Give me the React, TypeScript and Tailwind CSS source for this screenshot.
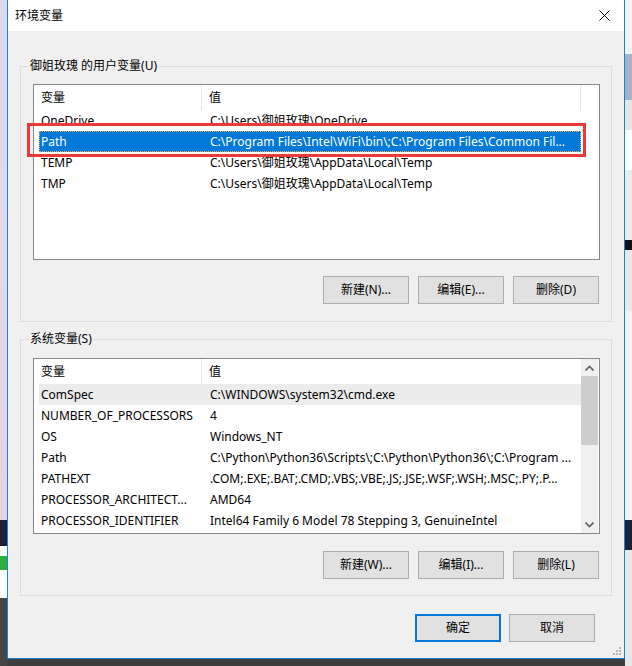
import React from 'react';

type Row = { name: string; value: string; state?: 'selected' | 'hover' };

const userVars: Row[] = [
    { name: 'OneDrive', value: 'C:\\Users\\御姐玫瑰\\OneDrive' },
    { name: 'Path', value: 'C:\\Program Files\\Intel\\WiFi\\bin\\;C:\\Program Files\\Common Fil...', state: 'selected' },
    { name: 'TEMP', value: 'C:\\Users\\御姐玫瑰\\AppData\\Local\\Temp' },
    { name: 'TMP', value: 'C:\\Users\\御姐玫瑰\\AppData\\Local\\Temp' },
];

const systemVars: Row[] = [
    { name: 'ComSpec', value: 'C:\\WINDOWS\\system32\\cmd.exe', state: 'hover' },
    { name: 'NUMBER_OF_PROCESSORS', value: '4' },
    { name: 'OS', value: 'Windows_NT' },
    { name: 'Path', value: 'C:\\Python\\Python36\\Scripts\\;C:\\Python\\Python36\\;C:\\Program ...' },
    { name: 'PATHEXT', value: '.COM;.EXE;.BAT;.CMD;.VBS;.VBE;.JS;.JSE;.WSF;.WSH;.MSC;.PY;.P...' },
    { name: 'PROCESSOR_ARCHITECT...', value: 'AMD64' },
    { name: 'PROCESSOR_IDENTIFIER', value: 'Intel64 Family 6 Model 78 Stepping 3, GenuineIntel' },
];

const VarRow: React.FC<{ row: Row }> = ({ row }) => {
    const tone =
        row.state === 'selected'
            ? 'bg-[#0078d7] text-white outline-1 outline-dotted -outline-offset-1 outline-[#f3a956]'
            : row.state === 'hover'
              ? 'bg-[#ececec]'
              : '';
    return (
        <div className={`flex h-[21px] items-center ml-[5px] ${tone}`}>
            <div className="w-[163px] pl-[2px] pr-[4px] truncate">{row.name}</div>
            <div className="flex-1 pl-[8px] pr-[4px] truncate">{row.value}</div>
        </div>
    );
};

const Chevron: React.FC<{ down?: boolean }> = ({ down }) => (
    <svg width="9" height="6" viewBox="0 0 9 6" className={down ? 'rotate-180' : ''}>
        <path d="M0.5 5.5 L4.5 1.5 L8.5 5.5" fill="none" stroke="#606060" strokeWidth="1.6" />
    </svg>
);

const VarList: React.FC<{ rows: Row[]; scroll?: boolean; marked?: boolean }> = ({ rows, scroll, marked }) => (
    <div className="relative flex h-[176px] border border-[#828790] bg-white">
        <div className="w-[547px] flex flex-col overflow-hidden">
            <div className="flex h-[25px] shrink-0 items-center">
                <div className="w-[168px] h-full flex items-center pl-[7px] border-r border-[#e5e5e5]">变量</div>
                <div className={`flex-1 h-full flex items-center pl-[7px] ${scroll ? '' : 'border-r border-[#e5e5e5]'}`}>值</div>
            </div>
            {rows.map((r) => (
                <VarRow key={r.name} row={r} />
            ))}
        </div>
        {scroll ? (
            <div className="w-[17px] bg-[#f0f0f0] flex flex-col items-center">
                <div className="h-[17px] flex items-center justify-center">
                    <Chevron />
                </div>
                <div className="w-[17px] h-[69px] bg-[#cdcdcd]" />
                <div className="flex-1" />
                <div className="h-[17px] flex items-center justify-center">
                    <Chevron down />
                </div>
            </div>
        ) : (
            <div className="w-[17px]" />
        )}
        {marked && (
            <div className="absolute left-[-7px] top-[38px] w-[559px] h-[34px] border-[3px] border-[#ec3a3a]" />
        )}
    </div>
);

const Btn: React.FC<{ label: string; primary?: boolean }> = ({ label, primary }) => (
    <button
        className={`w-[86px] h-[28px] bg-[#e1e1e1] text-black ${
            primary ? 'border-2 border-[#0078d7]' : 'border border-[#adadad]'
        }`}
    >
        {label}
    </button>
);

const Group: React.FC<{ title: string; children: React.ReactNode; className?: string }> = ({ title, children, className }) => (
    <div className={`relative mx-[12px] border border-[#dcdcdc] pl-[12px] pr-[11px] ${className ?? ''}`}>
        <span className="absolute left-[8px] top-[-9px] px-[1px] bg-[#f0f0f0] leading-[16px]">{title}</span>
        {children}
    </div>
);

export default function App() {
    return (
        <div className="w-[632px] h-[666px] flex overflow-hidden text-[12px] text-black font-['Noto_Sans','Noto_Sans_CJK_SC',sans-serif]">
            {/* desktop behind, left edge */}
            <div className="w-[7px] flex flex-col">
                <div className="h-[520px] bg-linear-to-b from-[#dcd9ee] via-[#e2d8ec] to-[#e6d2e2]" />
                <div className="h-[26px] bg-[#1d2038]" />
                <div className="h-[10px] bg-white" />
                <div className="h-[14px] bg-[#2fae3a]" />
                <div className="h-[28px] bg-white" />
                <div className="flex-1 bg-[#454545]" />
            </div>

            <div className="w-[618px] flex flex-col">
                <div className="h-[659px] flex flex-col bg-[#f0f0f0] border-x border-b border-[#1883d7]">
                    <div className="h-[31px] bg-white flex items-center justify-between pl-[7px] pr-[14px]">
                        <span>环境变量</span>
                        <svg width="11" height="11" viewBox="0 0 11 11">
                            <path d="M0.5 0.5 L10.5 10.5 M10.5 0.5 L0.5 10.5" stroke="#000" strokeWidth="1" />
                        </svg>
                    </div>

                    <Group title="御姐玫瑰 的用户变量(U)" className="mt-[35px] pt-[17px] pb-[17px]">
                        <VarList rows={userVars} marked />
                        <div className="mt-[16px] flex justify-end gap-[9px] pr-[1px]">
                            <Btn label="新建(N)..." />
                            <Btn label="编辑(E)..." />
                            <Btn label="删除(D)" />
                        </div>
                    </Group>

                    <Group title="系统变量(S)" className="mt-[17px] pt-[18px] pb-[16px]">
                        <VarList rows={systemVars} scroll />
                        <div className="mt-[17px] flex justify-end gap-[9px] pr-[1px]">
                            <Btn label="新建(W)..." />
                            <Btn label="编辑(I)..." />
                            <Btn label="删除(L)" />
                        </div>
                    </Group>

                    <div className="mt-[18px] flex justify-end gap-[8px] pr-[29px]">
                        <Btn label="确定" primary />
                        <Btn label="取消" />
                    </div>

                    <div className="mt-auto flex justify-end pr-[3px] pb-[3px]">
                        <svg width="8" height="8" viewBox="0 0 8 8" fill="#b5b5b5">
                            <rect x="6" y="0" width="2" height="2" />
                            <rect x="3" y="3" width="2" height="2" />
                            <rect x="6" y="3" width="2" height="2" />
                            <rect x="0" y="6" width="2" height="2" />
                            <rect x="3" y="6" width="2" height="2" />
                            <rect x="6" y="6" width="2" height="2" />
                        </svg>
                    </div>
                </div>
                <div className="flex-1 bg-[#3e3e3e]" />
            </div>

            {/* desktop behind, right edge */}
            <div className="w-[7px] flex flex-col">
                <div className="h-[54px] bg-[#f2f2f2]" />
                <div className="h-[46px] bg-[#a8b2c8]" />
                <div className="h-[30px] bg-[#e6e6e6]" />
                <div className="h-[40px] bg-white" />
                <div className="h-[70px] bg-[#ececec]" />
                <div className="h-[10px] bg-[#111]" />
                <div className="h-[60px] bg-[#e9e9e9]" />
                <div className="h-[210px] bg-[#f3f3f3]" />
                <div className="h-[30px] bg-[#1d2038]" />
                <div className="flex-1 bg-[#e8e8e8]" />
            </div>
        </div>
    );
}
